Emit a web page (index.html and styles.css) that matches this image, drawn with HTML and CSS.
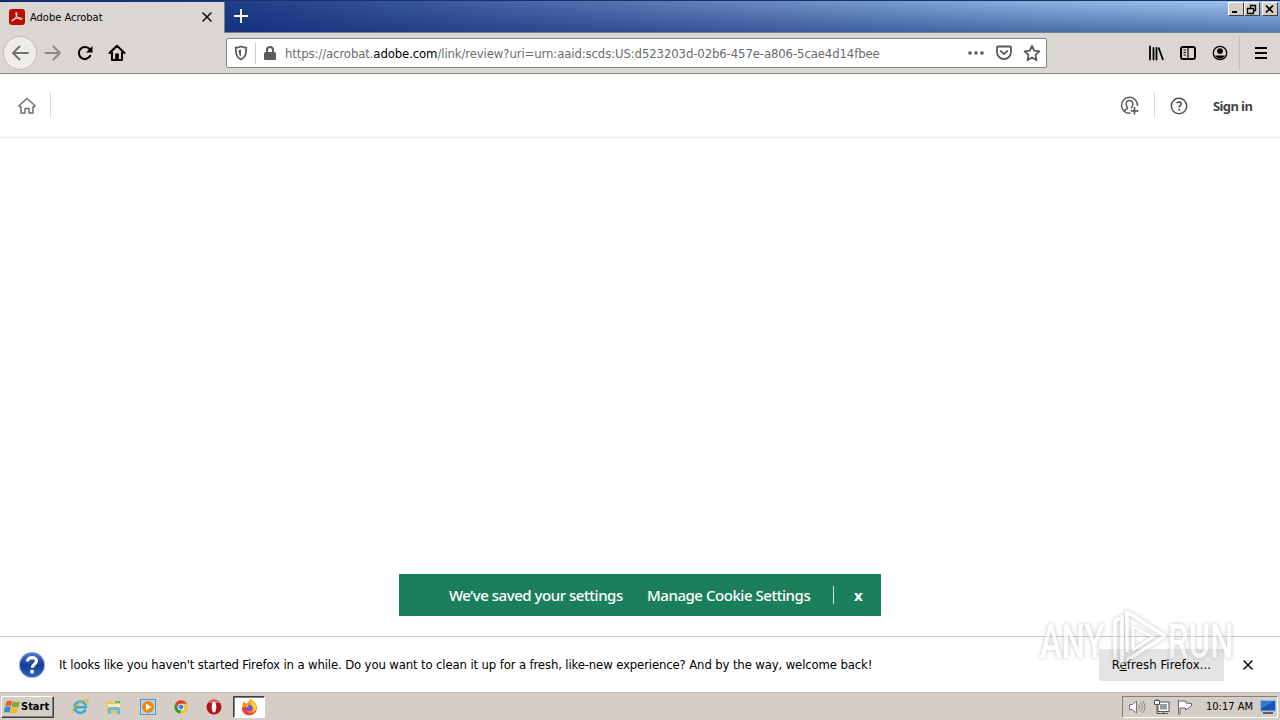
FILE: index.html
```html
<!DOCTYPE html>
<html lang="en">
<head>
  <meta charset="UTF-8">
  <meta name="viewport" content="width=device-width, initial-scale=1.0">
  <title>Adobe Acrobat</title>
  <link rel="stylesheet" href="styles.css">
</head>
<body>
  <div class="screen">

    <!-- title bar with tabs -->
    <div class="titlebar">
      <div class="tab">
        <svg class="tab-icon" width="16" height="16" viewBox="0 0 16 16"><rect width="16" height="16" rx="3" fill="#b80d00"/><path d="M3.2 12c1.6-.2 4.6-4.1 4.7-7.3 0-1.8-1.3-1.6-1.1 0C7.100 7.200 10 10.400 12.300 10.500c1.300-.1.900-1.500-1-1.600-2.600-.1-6 .8-7.900 2.100-.8.600-.9 1-.2 1z" fill="none" stroke="#fff"/></svg>
        <span class="tab-title">Adobe Acrobat</span>
        <svg width="12" height="12" viewBox="0 0 12 12"><path d="M2 2l8 8M10 2l-8 8" stroke="#111" stroke-width="1.600" stroke-linecap="round"/></svg>
      </div>
      <svg class="new-tab" width="16" height="16" viewBox="0 0 16 16"><path d="M8 1v14M1 8h14" stroke="#fff" stroke-width="1.8"/></svg>
      <div class="window-buttons">
        <div class="win-btn"><svg width="14" height="12"><path d="M3 9h5" stroke="#000" stroke-width="2"/></svg></div>
        <div class="win-btn"><svg width="14" height="12"><path d="M5.500 5V2.500h5v5H9M5 2.500h6M2.500 5.500h6v5h-6zM2 5.500h7" fill="none" stroke="#000" stroke-width="1.300"/></svg></div>
        <div class="win-btn win-close"><svg width="14" height="12"><path d="M3 2.500l7 7M10 2.500l-7 7" stroke="#000" stroke-width="1.700"/></svg></div>
      </div>
    </div>

    <!-- navigation toolbar -->
    <div class="toolbar">
      <div class="nav">
        <span class="back"><svg width="18" height="18" viewBox="0 0 18 18"><path d="M17 9H2M8.500 2.500L2 9l6.500 6.500" fill="none" stroke="#757371" stroke-width="2" stroke-linecap="round" stroke-linejoin="round"/></svg></span>
        <svg width="18" height="18" viewBox="0 0 18 18"><path d="M1.500 9H16M9.500 2.500L16 9l-6.500 6.500" fill="none" stroke="#8c8986" stroke-width="2" stroke-linecap="round" stroke-linejoin="round"/></svg>
        <svg width="16" height="16" viewBox="0 0 16 16"><path d="M13.200 10.800A6 6 0 1 1 12 3.600l1.500 1.500" fill="none" stroke="#000" stroke-width="2.100" stroke-linecap="round"/><path d="M15.500 1v6.500H9z"/></svg>
        <svg width="18" height="18" viewBox="0 0 18 18"><path d="M1.500 9L9 1.800 16.500 9M4 8.500v7.500h10V8.500" fill="none" stroke="#000" stroke-width="2.100" stroke-linecap="round" stroke-linejoin="round"/><path d="M7.200 9.500h3.600V16H7.200z"/></svg>
      </div>
      <div class="urlbar">
        <svg width="14" height="16" viewBox="0 0 14 16"><path d="M7 1.500c2 .9 3.600 1.200 5.200 1.200 0 6-.4 9.500-5.200 11.800C2.200 12.200 1.800 8.700 1.800 2.700 3.400 2.700 5 2.400 7 1.500z" fill="none" stroke="#5b5b5b" stroke-width="1.800"/><path d="M7 4.500v7c-2-1.300-2.300-3.300-2.400-6.300z" fill="#5b5b5b"/></svg>
        <span class="url-divider"></span>
        <svg width="14" height="16" viewBox="0 0 14 16"><rect x="1" y="7" width="12" height="8" rx="1.500" fill="#5b5b5b"/><path d="M4 8V5a3 3 0 0 1 6 0v3" fill="none" stroke="#5b5b5b" stroke-width="2"/></svg>
        <span class="url">https://acrobat.<b>adobe.com</b>/link/review?uri=urn:aaid:scds:US:d523203d-02b6-457e-a806-5cae4d14fbee</span>
        <svg class="dots" width="16" height="16" viewBox="0 0 16 16" fill="#5b5b5b"><circle cx="2" cy="8" r="1.800"/><circle cx="8" cy="8" r="1.800"/><circle cx="14" cy="8" r="1.800"/></svg>
        <svg width="16" height="16" viewBox="0 0 16 16" fill="none" stroke="#5b5b5b" stroke-width="1.800" stroke-linecap="round" stroke-linejoin="round"><path d="M2 1.500h12c.6 0 1 .4 1 1V7c0 4-3 7-7 7s-7-3-7-7V2.500c0-.6.400-1 1-1z"/><path d="M4.700 6L8 9.200 11.300 6"/></svg>
        <svg width="18" height="18" viewBox="0 0 18 18"><path d="M9 1.800l2.200 4.900 5.200.6-3.900 3.600 1 5.200L9 13.500l-4.500 2.600 1-5.200-3.900-3.600 5.200-.6z" fill="none" stroke="#5b5b5b" stroke-width="1.800" stroke-linejoin="round"/></svg>
      </div>
      <div class="tools">
        <svg width="16" height="16" viewBox="0 0 16 16"><path d="M2 1.500v13M5.500 3v11.500M8.500 3v11.500M10.800 3.200l4 11" fill="none" stroke="#000" stroke-width="1.800" stroke-linecap="round"/></svg>
        <svg width="16" height="16" viewBox="0 0 16 16"><rect x="1" y="2" width="14" height="12" rx="2" fill="none" stroke="#000" stroke-width="2"/><path d="M8 2v12M3.500 5H6M3.500 7.500H6M3.500 10H6" stroke="#000" stroke-width="1.200"/></svg>
        <svg width="16" height="16" viewBox="0 0 16 16"><circle cx="8" cy="8" r="6.700" fill="none" stroke="#000" stroke-width="1.300"/><circle cx="8" cy="6.100" r="2.900"/><path d="M3.300 10.500h9.400C11.800 12.700 10 13.600 8 13.600s-3.800-.9-4.700-3.100z"/></svg>
        <span class="tools-divider"></span>
        <svg width="14" height="14" viewBox="0 0 14 14"><path d="M1 2h12M1 7h12M1 12h12" stroke="#000" stroke-width="2"/></svg>
      </div>
    </div>

    <!-- page content -->
    <main class="page">
      <header class="page-header">
        <svg width="18" height="18" viewBox="0 0 18 18"><path d="M1 8.800L9 1.500l8 7.300-.6.900H15V16h-4v-4.500H7V16H3V9.700H1.600z" fill="none" stroke="#6e6e6e" stroke-width="1.500" stroke-linejoin="round"/></svg>
        <span class="page-divider"></span>
        <div class="page-actions">
          <svg width="20" height="20" viewBox="0 0 20 20" fill="none" stroke="#5a5a5a" stroke-width="1.500"><path d="M10.500 17.300A8 8 0 1 1 17.500 10"/><path d="M4 15.300c.2-1.800 3.500-1.700 3.500-3.100 0-1-1.300-1.600-1.300-4.100 0-2.200 1.300-3.600 3.300-3.600s3.300 1.400 3.300 3.600c0 2.400-1.400 3-1.400 4.300"/><path d="M14.500 11v7.500M10.700 14.800h7.600" stroke-width="1.700"/></svg>
          <span class="page-divider"></span>
          <svg class="help" width="18" height="18" viewBox="0 0 18 18"><circle cx="9" cy="9" r="7.700" fill="none" stroke="#505050" stroke-width="1.500"/><path d="M6.700 6.200C7.400 4.700 11.200 4.500 11.200 7c0 1.600-2.100 1.700-2.100 3.500" fill="none" stroke="#505050" stroke-width="1.600"/><circle cx="9.100" cy="12.800" r="1" fill="#505050"/></svg>
          <span class="sign-in">Sign in</span>
        </div>
      </header>
      <div class="cookie-bar">
        <span class="saved">We’ve saved your settings</span>
        <span class="manage">Manage Cookie Settings</span>
        <span class="cookie-divider"></span>
        <span class="cookie-close">x</span>
      </div>
    </main>

    <!-- firefox notification -->
    <div class="notification">
      <svg width="28" height="28" viewBox="0 0 28 28"><defs><linearGradient id="q" x1="0" y1="0" x2="0" y2="1"><stop offset="0" stop-color="#5079c5"/><stop offset=".5" stop-color="#173d96"/><stop offset="1" stop-color="#2867c4"/></linearGradient></defs><circle cx="14" cy="14" r="12.700" fill="url(#q)" stroke="#a9bbdd" stroke-width="1"/><path d="M9.500 10.500C9.800 5.300 18.700 5.500 18.500 10.200c-.1 3.100-4.300 3.200-4.300 6.600" fill="none" stroke="#fff" stroke-width="3.200"/><rect x="12.300" y="18.800" width="3.600" height="3.600" rx="1" fill="#fff"/></svg>
      <span class="message">It looks like you haven't started Firefox in a while. Do you want to clean it up for a fresh, like-new experience? And by the way, welcome back!</span>
      <button class="refresh">R<u>e</u>fresh Firefox...</button>
      <svg width="12" height="12" viewBox="0 0 12 12"><path d="M2 2l8 8M10 2l-8 8" stroke="#111" stroke-width="1.600" stroke-linecap="round"/></svg>
    </div>

    <!-- taskbar -->
    <div class="taskbar">
      <div class="start">
        <svg width="17" height="16" viewBox="0 0 17 16"><path d="M2.500 2.500C4.500 1 6.500 1.200 8.300 2.300L7 7.500C5.200 6.500 3 6.500 1 7.500z" fill="#e8632b"/><path d="M9 2.600c2 1 4.300 1 7-.3l-1.500 5.200c-2 1.300-4.700 1.300-6.900.3z" fill="#77ad35"/><path d="M.8 8.300c2-1 4-1 6.100 0l-1.400 5.400C3.500 12.600 1.600 12.700 0 13.500z" fill="#3d83cf"/><path d="M7.400 8.600c2.200 1 4.700.9 6.800-.3l-1.400 5.400c-2.100 1.300-4.600 1.300-6.700.2z" fill="#f6bb21"/></svg>
        <span>Start</span>
      </div>
      <div class="launch">
        <svg width="18" height="18" viewBox="0 0 18 18"><path d="M14.500 11.500A5.700 5.700 0 1 1 15 9.200H5" fill="none" stroke="#38a5db" stroke-width="2.500"/><path d="M1.500 15.500C-.5 12 10 1 16.500 2c1 .8.500 2.200-.3 3" fill="none" stroke="#e4b52c" stroke-width="1.400"/></svg>
        <svg width="18" height="18" viewBox="0 0 18 18"><path d="M2 3h5l1 2h7v10H2z" fill="#e6c65c"/><path d="M3 6h12v3H3z" fill="#f9eda7"/><path d="M10 3h5v2h-5z" fill="#68b46f"/><path d="M3 16v-4c0-2 1-3 3-3h6c2 0 3 1 3 3v4h-3v-4H6v4z" fill="#69b9df"/></svg>
        <svg width="18" height="18" viewBox="0 0 18 18"><rect x="1.500" y="1.500" width="15" height="15" fill="#b5d8ef" stroke="#5297c9"/><circle cx="9" cy="9" r="6" fill="#f58608"/><path d="M7 5.500v7L12.500 9z" fill="#fff"/></svg>
        <svg width="16" height="18" viewBox="0 0 18 18"><circle cx="9" cy="9" r="7.500" fill="#f7c51e"/><path d="M2.500 5.300A7.500 7.500 0 0 1 15.500 5.300H9L5.800 11z" fill="#dc4335"/><path d="M2.500 5.300l3.300 5.700L9 13l-1 3.400A7.500 7.500 0 0 1 2.500 5.300z" fill="#2d9b4e"/><circle cx="9" cy="9" r="3.700" fill="#fff"/><circle cx="9" cy="9" r="2.800" fill="#4285df"/></svg>
        <svg width="18" height="18" viewBox="0 0 18 18"><circle cx="9" cy="9" r="7.500" fill="#b31017"/><path d="M3 5A7 7 0 0 1 15 5z" fill="#df6869"/><ellipse cx="9" cy="9" rx="2.300" ry="5.500" fill="#fff"/></svg>
      </div>
      <div class="task-active">
        <svg width="18" height="18" viewBox="0 0 18 18"><path d="M10 1c4 2 7 5 7 9a7.500 7.500 0 0 1-15 0c0-3 1-5 2-7l1.500 2.500 2.500-.5z" fill="#ff8a20"/><path d="M11 1c4 3 6 6 5 10-1 2-2 3-3 3 1-5-1-6-3-7z" fill="#ffcb31"/><path d="M2 10c0 9 12 9 14.500 2-1 1-3 3-5 3-4 1-6-3-5-7z" fill="#f2394f"/><circle cx="9.200" cy="10" r="3.300" fill="#7854d4"/><path d="M4 6l4 1 1 1.500-3 1z" fill="#ffac20"/></svg>
      </div>
      <div class="tray">
        <svg width="18" height="16" viewBox="0 0 18 16"><path d="M1.500 5.500h3L8.500 2v12l-4-3.500h-3z" fill="#fff" stroke="#777"/><path d="M10.500 5.500q2 2.500 0 5M12.500 3.500q3.500 4.500 0 9M14.500 2q5 6 0 12" fill="none" stroke="#888"/></svg>
        <svg width="17" height="16" viewBox="0 0 17 16"><rect x="5" y="3" width="11" height="9.500" fill="#fff" stroke="#555"/><rect x="7" y="5" width="7" height="5.500" fill="#999"/><path d="M1.500 1.500h5v4h-5z" fill="#fff" stroke="#555"/><path d="M3 0v2M5 0v2M4 6v8.500h4M8 14.500h7M10.500 12.500v2" fill="none" stroke="#555"/></svg>
        <svg width="16" height="16" viewBox="0 0 16 16"><path d="M1.500 1v14H3V9h5.500v2l6-4V4.500L9 4V2H1.500z" fill="#fff" stroke="#666"/></svg>
        <span class="clock">10:17 AM</span>
        <svg width="16" height="14" viewBox="0 0 16 14"><rect x=".5" y=".5" width="15" height="10.500" fill="#1556b4" stroke="#8ab7e7"/><path d="M1 1h14C10 3 5 6 1 9z" fill="#3979cb"/><path d="M3 13h10" stroke="#333" stroke-width="1.500"/></svg>
      </div>
    </div>

    <!-- recorder watermark -->
    <div class="watermark">
      <span>ANY</span>
      <svg width="58" height="66" viewBox="0 0 58 66" fill="none" stroke="#fff" stroke-width="3.500" stroke-linejoin="round"><path d="M7 51V13l5-3M14 57V7M19 44V4l38 24-38 24"/><path d="M19 4v12M25 19v23l20-13z" stroke-width="2.500"/></svg>
      <span class="run">RUN</span>
    </div>
  </div>
</body>
</html>
```
FILE: styles.css
```css
* {
  box-sizing: border-box;
}
body {
  margin: 0;
  overflow: hidden;
  font-family: "DejaVu Sans Condensed", "DejaVu Sans", sans-serif;
  font-stretch: condensed;
  font-size: 11px;
  color: #000;
}
svg {
  display: block;
  flex: none;
}
span {
  white-space: nowrap;
}
.screen {
  position: relative;
  display: flex;
  flex-direction: column;
  width: 1280px;
  height: 720px;
  background: #fff;
}
/* title bar */
.titlebar {
  display: flex;
  height: 33px;
  border-top: 1px solid #17306f;
  border-bottom: 1px solid #77808f;
  background: linear-gradient(rgba(10, 40, 115, 0), rgba(10, 40, 115, 0.5)), linear-gradient(90deg, #0a246a, #203f88 19%, #5878b3 50%, #89aedd 80%, #a2c8f0);
}
.tab {
  display: flex;
  align-items: center;
  width: 225px;
  height: 32px;
  margin-top: 1px;
  padding: 0 11px 2px 9px;
  background: #dad7d3;
  border-right: 1px solid #77808f;
}
.tab-title {
  flex: 1;
  margin-left: 5px;
}
.new-tab {
  margin: 7px 0 0 8px;
}
.window-buttons {
  display: flex;
  margin-left: auto;
  padding: 1px 2px 0 0;
}
.win-btn {
  width: 16px;
  height: 14px;
  background: #d4d0c8;
  border: 1px solid;
  border-color: #fff #404040 #404040 #fff;
}
.win-close {
  margin-left: 2px;
}
/* toolbar */
.toolbar {
  display: flex;
  align-items: center;
  height: 41px;
  background: #dad7d3;
  border-bottom: 1px solid #828282;
}
.nav {
  display: flex;
  align-items: center;
  width: 226px;
  padding-left: 3px;
}
.back {
  display: flex;
  align-items: center;
  justify-content: center;
  width: 34px;
  height: 34px;
  margin-right: 7px;
  border: 1px solid #c0bdb9;
  border-radius: 50%;
  background: #efedea;
}
.nav > svg {
  margin-right: 15px;
}
.urlbar {
  display: flex;
  align-items: center;
  width: 821px;
  height: 30px;
  padding: 0 5px 0 7px;
  border: 1px solid #858585;
  border-radius: 2px;
  background: #fff;
}
.url-divider {
  width: 1px;
  height: 22px;
  margin: 0 7px;
  background: #ccc;
}
.url {
  flex: 1;
  margin-left: 8px;
  font-size: 13px;
  letter-spacing: -0.11px;
  color: #6c6c6c;
}
.url b {
  font-weight: normal;
  color: #000;
}
.dots {
  margin-right: 12px;
}
.dots + svg {
  margin-right: 11px;
}
.tools {
  display: flex;
  align-items: center;
  gap: 16px;
  margin-left: 101px;
}
.tools-divider {
  width: 1px;
  height: 34px;
  margin: 0 -2px 0 -5px;
  background: #c2bfbb;
}
/* page */
.page {
  display: flex;
  flex: 1;
  flex-direction: column;
  align-items: center;
}
.page-header {
  display: flex;
  align-items: center;
  width: 100%;
  height: 64px;
  padding: 0 27px 0 18px;
  border-bottom: 1px solid #eaeaea;
}
.page-divider {
  width: 1px;
  height: 25px;
  margin-left: 14px;
  background: #d8d8d8;
}
.page-actions {
  display: flex;
  align-items: center;
  margin-left: auto;
}
.help {
  margin: 0 25px 0 15px;
}
.sign-in {
  width: 40px;
  font: bold 13px "Noto Sans", sans-serif;
  letter-spacing: -0.6px;
  color: #444;
}
.cookie-bar {
  display: flex;
  align-items: center;
  width: 482px;
  height: 42px;
  margin: auto 0 20px;
  padding-left: 50px;
  background: #1b7f5c;
  color: #fff;
  font: 500 15px "Noto Sans", sans-serif;
  letter-spacing: -0.46px;
}
.saved {
  width: 198px;
}
.manage {
  width: 186px;
}
.cookie-divider {
  width: 1px;
  height: 18px;
  margin-right: 20px;
  background: #d1e6df;
}
.cookie-close {
  font-weight: bold;
}
/* notification */
.notification {
  display: flex;
  align-items: center;
  height: 56px;
  padding: 0 26px 0 18px;
  border-top: 1px solid #c8c8c8;
}
.message {
  flex: 1;
  margin-left: 13px;
  font-size: 13px;
  letter-spacing: -0.138px;
}
.refresh {
  width: 125px;
  height: 32px;
  margin-right: 18px;
  padding: 0;
  border: 0;
  background: #e4e4e4;
  font: inherit;
  font-size: 13px;
  letter-spacing: 0.1px;
}
/* taskbar */
.taskbar {
  display: flex;
  align-items: center;
  height: 28px;
  padding: 2px 2px 2px 1px;
  border-top: 1px solid #c0c0c0;
  background: #d5cec7;
}
.start {
  display: flex;
  align-items: center;
  width: 53px;
  height: 22px;
  padding-left: 2px;
  border: 1px solid;
  border-color: #fff #404040 #404040 #fff;
  box-shadow: inset -1px -1px #808080;
  font-weight: bold;
}
.launch {
  display: flex;
  align-items: center;
  gap: 16px;
  margin-left: 17px;
}
.task-active {
  display: flex;
  justify-content: center;
  align-items: center;
  width: 32px;
  height: 22px;
  margin-left: 10px;
  border: 1px solid;
  border-color: #404040 #fff #fff #404040;
  box-shadow: inset 1px 1px #808080;
  background: #fff;
}
.tray {
  display: flex;
  align-items: center;
  width: 156px;
  height: 22px;
  margin-left: auto;
  padding-left: 5px;
  border: 1px solid;
  border-color: #808080 #fff #fff #808080;
}
.tray svg {
  margin-right: 7px;
}
.clock {
  margin: 0 7px 0 6px;
}
/* watermark lies over the page and the notification */
.watermark {
  position: absolute;
  left: 1040px;
  top: 607px;
  display: flex;
  align-items: center;
  width: 194px;
  height: 68px;
  color: #fff;
  font: 500 49px "Roboto", sans-serif;
  opacity: 0.6;
  filter: drop-shadow(0 0 2px #999);
  pointer-events: none;
}
.watermark span {
  width: 68px;
  transform: scaleX(0.67);
  transform-origin: left;
}
.watermark .run {
  margin-left: 2px;
}
```
